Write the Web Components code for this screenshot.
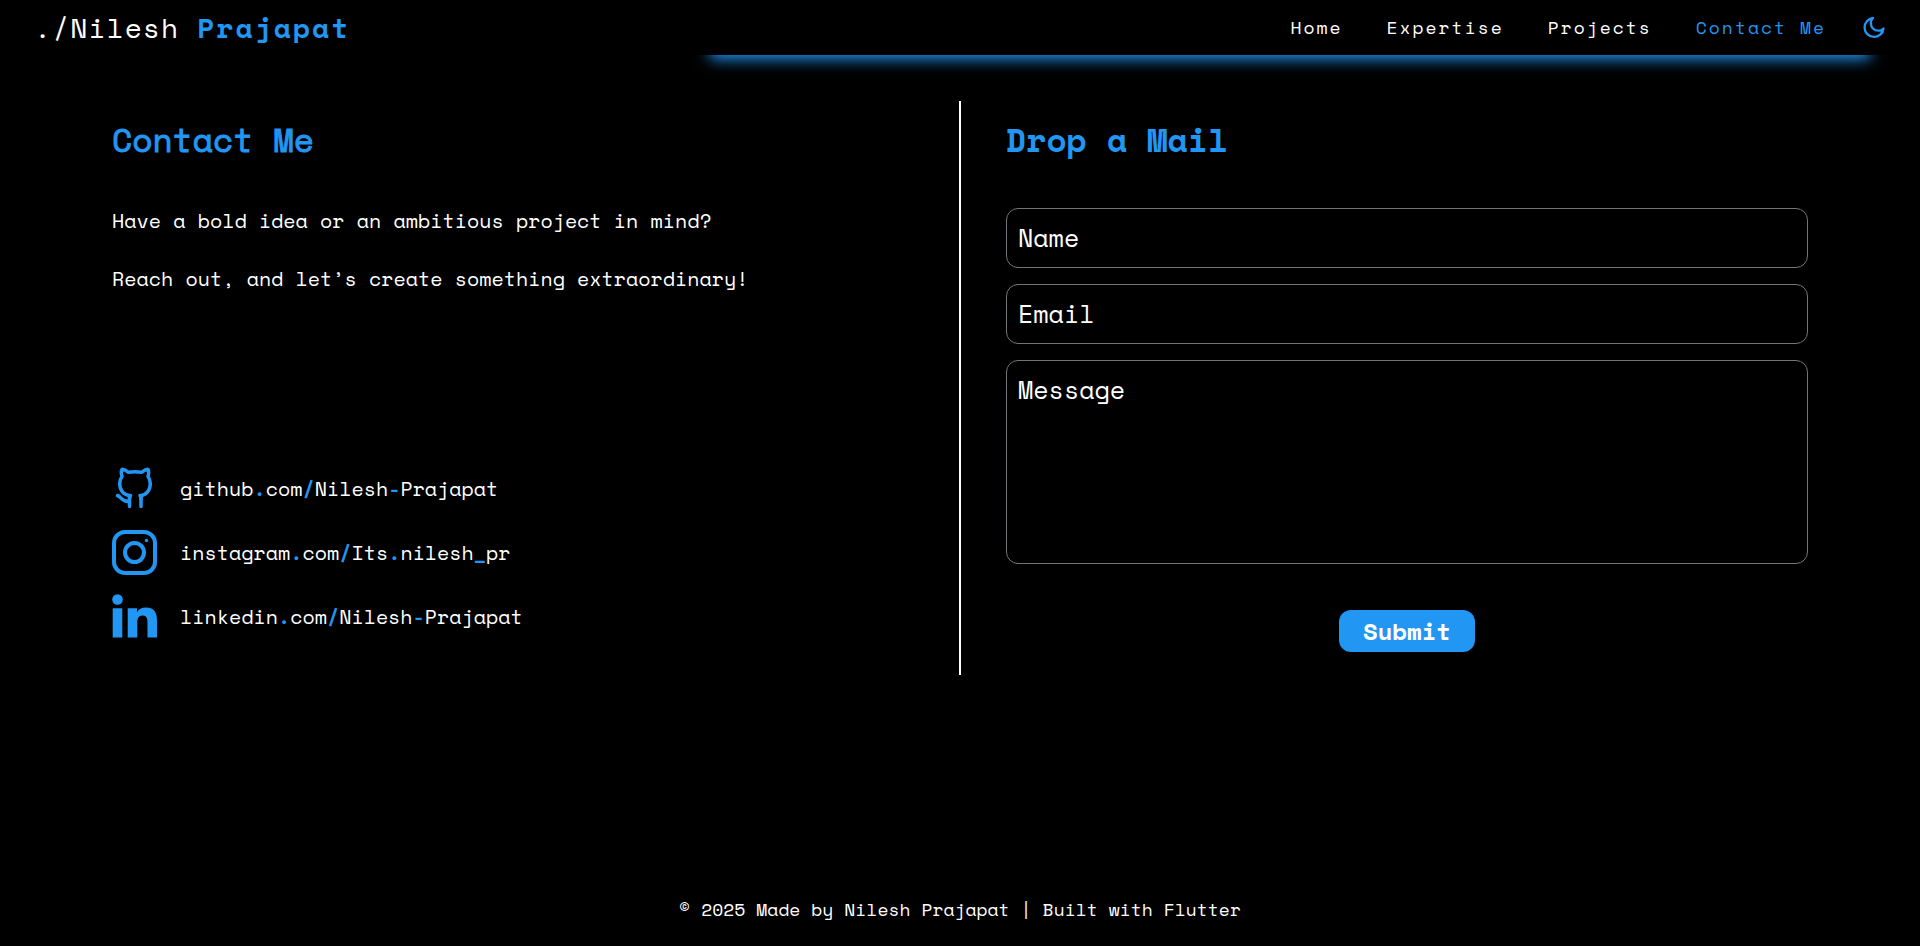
<!DOCTYPE html>
<html lang="en">
<head>
<meta charset="utf-8">
<meta name="viewport" content="width=device-width, initial-scale=1">
<title>Nilesh Prajapat – Contact</title>
<style>
  body {
    --accent: #2196f3;
    margin: 0;
    min-height: 100vh;
    background: #000;
    color: #fff;
    font-family: "Space Mono", "DejaVu Sans Mono", monospace;
    display: flex;
    flex-direction: column;
  }
</style>
</head>
<body>
<site-header></site-header>
<contact-page>
  <contact-info slot="info">
    <social-link icon="github" href="https://github.com/Nilesh-Prajapat">github<b>.</b>com<b>/</b>Nilesh<b>-</b>Prajapat</social-link>
    <social-link icon="instagram" href="https://instagram.com/Its.nilesh_pr">instagram<b>.</b>com<b>/</b>Its<b>.</b>nilesh<b>_</b>pr</social-link>
    <social-link icon="linkedin" href="https://linkedin.com/in/Nilesh-Prajapat">linkedin<b>.</b>com<b>/</b>Nilesh<b>-</b>Prajapat</social-link>
  </contact-info>
  <mail-form slot="form"></mail-form>
</contact-page>
<site-footer>© 2025 Made by Nilesh Prajapat | Built with Flutter</site-footer>
<script>
function define(name, html, setup) {
  const template = document.createElement('template');
  template.innerHTML = html;
  customElements.define(name, class extends HTMLElement {
    constructor() {
      super();
      this.attachShadow({ mode: 'open' }).append(template.content.cloneNode(true));
    }
    connectedCallback() { if (setup) setup(this, this.shadowRoot); }
  });
}

const icons = {
  github: '<g fill="none" stroke="currentColor" stroke-width="3.500" stroke-linecap="round" stroke-linejoin="round"><path d="M29 40.500V29.500C34.500 28.500 38.300 24 38.300 17.500Q38.300 13.500 36 10.500Q37.500 6 35.800 3.300Q33 3.500 29.500 6.300Q23 5 16.500 6.300Q13 3.500 10.200 3.300Q8.500 6 10 10.500Q7.700 13.500 7.700 17.500C7.700 24 11.500 28.500 17.500 29.500V40.500"/><path d="M29 33Q29 31 28 29.500M17.500 33Q17.500 31 18.500 29.500M5.500 29.500C9.500 31 10 36 17 35.500"/></g>',
  instagram: '<g fill="none" stroke="currentColor" stroke-width="4"><rect x="2" y="2" width="41" height="41" rx="11"/><circle cx="22.500" cy="22.500" r="9.500"/></g><circle cx="34.500" cy="10.500" r="1.700" fill="currentColor"/>',
  linkedin: '<g fill="currentColor"><circle cx="5.500" cy="5.500" r="5.300"/><path d="M.7 14.300H10.300V43.500H.7ZM15.700 14.300H25V18.300C26.500 15.500 29.500 13.600 34 13.600C43 13.600 45 19.500 45 27.200V43.500H35.500V29C35.500 25.500 35.300 21.500 30.700 21.500C26 21.500 25.300 25.200 25.300 28.800V43.500H15.700Z"/></g>'
};

define('nav-link', `
<style>
  :host { display: block; }
  a { color: #fff; text-decoration: none; font-size: 18px; line-height: 24px; letter-spacing: 2px; }
  :host([active]) a { color: var(--accent); }
</style>
<a><slot></slot></a>`, (host, root) => {
  root.querySelector('a').href = host.getAttribute('href');
});

define('site-header', `
<style>
  :host { display: block; position: relative; z-index: 1; }
  .glow { position: absolute; left: 37%; right: 50px; top: 8px; bottom: 0; box-shadow: 0 4px 14px var(--accent); }
  .bar {
    position: relative; background: #000; box-sizing: border-box; height: 55px;
    display: flex; align-items: center; justify-content: space-between; padding: 0 34px;
  }
  .logo { color: #fff; text-decoration: none; font-size: 28px; line-height: 36px; letter-spacing: 1px; white-space: pre; }
  .logo b { color: var(--accent); letter-spacing: 2px; }
  nav { display: flex; align-items: center; gap: 44px; }
  button { all: unset; cursor: pointer; color: var(--accent); width: 24px; height: 24px; margin-left: -8px; }
  svg { display: block; }
</style>
<div class="glow"></div>
<header class="bar">
  <a class="logo" href="#home">./Nilesh <b>Prajapat</b></a>
  <nav>
    <nav-link href="#home">Home</nav-link>
    <nav-link href="#expertise">Expertise</nav-link>
    <nav-link href="#projects">Projects</nav-link>
    <nav-link href="#contact" active>Contact Me</nav-link>
    <button type="button" aria-label="Toggle theme">
      <svg width="24" height="24" viewBox="0 0 24 24" fill="none" stroke="currentColor" stroke-width="2.300" stroke-linejoin="round"><path d="M11 2A9.500 9.500 0 1 0 21.500 12.500A7 7 0 0 1 11 2Z"/></svg>
    </button>
  </nav>
</header>`);

define('section-title', `
<style>
  :host { display: block; }
  h2 { margin: 0; color: var(--accent); font-size: 33px; line-height: 38px; font-weight: 400; -webkit-text-stroke: 1px var(--accent); }
  :host([strong]) h2 { font-weight: 700; -webkit-text-stroke: 0; }
</style>
<h2><slot></slot></h2>`);

define('social-link', `
<style>
  :host { display: block; }
  a { display: flex; align-items: center; gap: 23px; color: #fff; text-decoration: none; font-size: 20px; line-height: 28px; }
  svg { flex: none; color: var(--accent); }
  ::slotted(b) { color: var(--accent); font-weight: 700; }
</style>
<a><svg width="45" height="45" viewBox="0 0 45 45" aria-hidden="true"></svg><span><slot></slot></span></a>`, (host, root) => {
  root.querySelector('a').href = host.getAttribute('href');
  root.querySelector('svg').innerHTML = icons[host.getAttribute('icon')];
});

define('contact-info', `
<style>
  :host { display: flex; flex-direction: column; height: 100%; box-sizing: border-box; padding: 20px 0 36px; }
  .copy { margin-top: 48px; }
  p { margin: 0 0 30px; font-size: 20px; line-height: 28px; }
  .links { margin-top: auto; display: flex; flex-direction: column; gap: 19px; }
</style>
<section-title>Contact Me</section-title>
<div class="copy">
  <p>Have a bold idea or an ambitious project in mind?</p>
  <p>Reach out, and let’s create something extraordinary!</p>
</div>
<div class="links"><slot></slot></div>`);

define('mail-form', `
<style>
  :host { display: block; padding: 20px 0 23px 45px; }
  form { display: flex; flex-direction: column; gap: 16px; margin: 49px 0 0; }
  input, textarea {
    display: block; box-sizing: border-box; width: 100%; margin: 0; padding: 0 11px 2px;
    border: 1px solid #74747a; border-radius: 12px; background: transparent;
    color: #fff; font: 25px/32px "Space Mono", "DejaVu Sans Mono", monospace; outline: 0;
  }
  input { height: 60px; }
  textarea { height: 204px; padding: 13px 11px; resize: none; }
  ::placeholder { color: #fff; opacity: 1; }
  button {
    align-self: center; margin: 30px 0 0; padding: 3px 24px; border: 0; border-radius: 12px;
    background: var(--accent); color: #fff; font: 700 24px/36px "Space Mono", "DejaVu Sans Mono", monospace; cursor: pointer;
  }
</style>
<section-title strong>Drop a Mail</section-title>
<form>
  <input type="text" name="name" placeholder="Name" aria-label="Name">
  <input type="email" name="email" placeholder="Email" aria-label="Email">
  <textarea name="message" placeholder="Message" aria-label="Message"></textarea>
  <button type="submit">Submit</button>
</form>`);

define('contact-page', `
<style>
  :host { display: block; flex: 1; }
  main { display: grid; grid-template-columns: 1fr 2px 1fr; padding: 46px 112px 24px; }
  .rule { background: #fff; }
</style>
<main>
  <section><slot name="info"></slot></section>
  <div class="rule"></div>
  <section><slot name="form"></slot></section>
</main>`);

define('site-footer', `
<style>
  :host { display: block; padding: 24px; text-align: center; font-size: 18px; line-height: 26px; }
</style>
<footer><slot></slot></footer>`);
</script>
</body>
</html>
